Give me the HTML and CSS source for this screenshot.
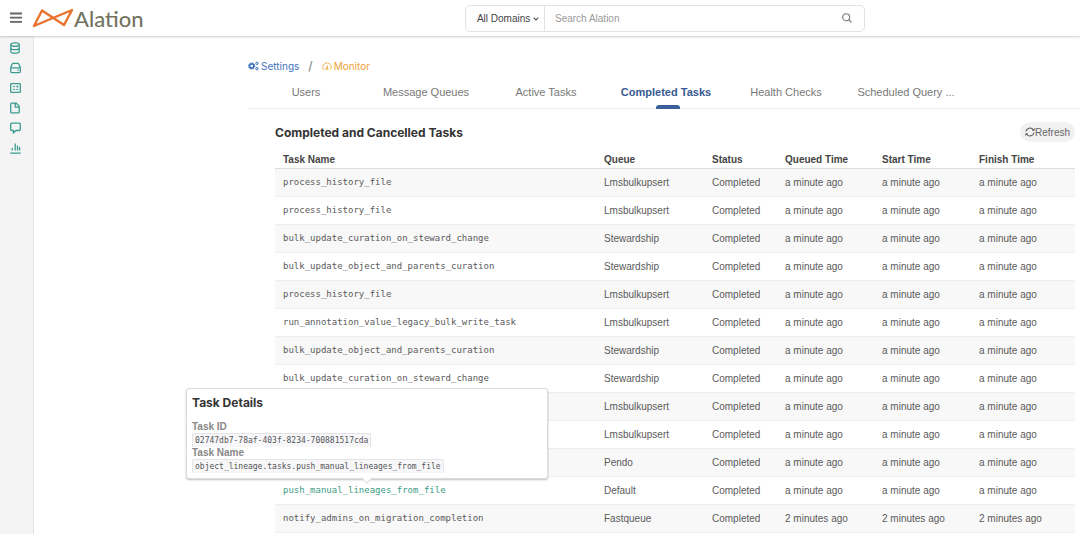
FILE: index.html
```
<!DOCTYPE html>
<html lang="en">
<head>
    <meta charset="utf-8">
    <title>Completed Tasks - Alation</title>
    <link rel="stylesheet" href="styles.css">
</head>
<body>
    <header class="topbar">
        <button class="menu-button" aria-label="Menu">
            <svg width="12" height="12" viewBox="0 0 12 12" fill="none" stroke="#66666a" stroke-width="1.8"><path d="M0 1.500h12M0 5.700h12M0 9.900h12"/></svg>
        </button>
        <a href="#" class="logo">
            <svg width="42" height="20" viewBox="0 0 42 20" fill="none" stroke="#e8722e" stroke-width="2.400" stroke-linejoin="round"><path d="M2 18 10 2.500 32 17 40 2Z"/></svg>
            <span>Alation</span>
        </a>
        <form class="search">
            <button type="button" class="domain-button">All Domains
                <svg width="6" height="4" viewBox="0 0 6 4" fill="none" stroke="#555" stroke-width="1.1"><path d="M.7.7 3 3 5.300.7"/></svg>
            </button>
            <input type="text" placeholder="Search Alation" aria-label="Search Alation">
            <button type="button" class="search-button" aria-label="Search">
                <svg width="10" height="10" viewBox="0 0 10 10" fill="none" stroke="#777" stroke-width="1.1"><circle cx="4.200" cy="4.200" r="3.500"/><path d="M6.800 6.800 9.500 9.500"/></svg>
            </button>
        </form>
    </header>

    <div class="page">
        <nav class="sidebar">
            <a href="#" aria-label="Data sources"><svg viewBox="0 0 12 12"><ellipse cx="5" cy="2.600" rx="4.200" ry="1.800"/><path d="M.8 2.600v6.800c0 1 1.800 1.800 4.200 1.800s4.200-.8 4.200-1.800V2.600M.8 5.900c0 1 1.800 1.700 4.200 1.700s4.200-.7 4.200-1.700"/></svg></a>
            <a href="#" aria-label="File systems"><svg viewBox="0 0 12 12"><path d="M.7 5.500 2.200 2c.2-.5.500-.7 1-.7h4.600c.5 0 .8.2 1 .7l1.500 3.500v4c0 .7-.4 1.100-1.100 1.100H1.800c-.7 0-1.100-.4-1.100-1.100ZM.7 5.800h9.600M7.400 8.200h1.300"/></svg></a>
            <a href="#" aria-label="BI sources"><svg viewBox="0 0 12 12"><rect x=".7" y="1.700" width="9.600" height="8.600" rx=".6"/><path d="M3 4.600h2M3 7.400h2M6.200 4.600h2M6.200 7.400h2M7.500 3.500v2" stroke-width="1"/></svg></a>
            <a href="#" aria-label="Articles"><svg viewBox="0 0 12 12"><path d="M1.700 1.200h4.600l2.900 2.900v5.800c0 .6-.4 1-1 1H1.700c-.6 0-1-.4-1-1V2.200c0-.6.400-1 1-1ZM5.200 1.200v3.900h4"/></svg></a>
            <a href="#" aria-label="Conversations"><svg viewBox="0 0 12 12"><path d="M1.700 1.200h7.600c.6 0 1 .4 1 1v5.300c0 .6-.4 1-1 1H6L3.400 11V8.500H1.700c-.6 0-1-.4-1-1V2.200c0-.6.400-1 1-1Z"/></svg></a>
            <a href="#" aria-label="Analytics"><svg viewBox="0 0 12 12"><path d="M.3 11.200h10.500M2.300 8.500V6M5.200 8.500V1.500M7.500 8.500V3.500M9.600 8.500V5"/></svg></a>
        </nav>

        <main class="content">
            <div class="breadcrumb">
                <a href="#" class="crumb-settings">
                    <svg width="11" height="10" viewBox="0 0 11 10" fill="none" stroke="#3f74bd"><circle cx="3.700" cy="5" r="2.200" stroke-width="1.700"/><circle cx="3.700" cy="5" r="3.200" stroke-width="1" stroke-dasharray="1.250 1.260"/><circle cx="9" cy="2.300" r="1.200" stroke-width="1"/><circle cx="9" cy="7.700" r="1.200" stroke-width="1"/></svg>
                    Settings</a>
                <span class="separator">/</span>
                <a href="#" class="crumb-monitor">
                    <svg width="10" height="9" viewBox="0 0 10 9" fill="none" stroke="#f0a236"><path d="M2 8A4.200 4.200 0 1 1 8 8" stroke-width="1" stroke-dasharray="3 .6"/><circle cx="5" cy="6.600" r="1"/><path d="M5 6 5.600 3.500"/></svg>
                    Monitor</a>
            </div>

            <nav class="tabs">
                <a href="#">Users</a>
                <a href="#">Message Queues</a>
                <a href="#">Active Tasks</a>
                <a href="#" class="active">Completed Tasks</a>
                <a href="#">Health Checks</a>
                <a href="#">Scheduled Query ...</a>
            </nav>

            <section class="tasks">
                <div class="tasks-header">
                    <h1>Completed and Cancelled Tasks</h1>
                    <button class="refresh"><svg width="10" height="10" viewBox="0 0 10 10" fill="none" stroke="#555" stroke-width="1.100"><path d="M.9 4.500A4.100 4.100 0 0 1 8.300 2.800M9.100 5.500A4.100 4.100 0 0 1 1.700 7.200"/><path d="M9.600 1v2.700H6.900ZM.4 9V6.300h2.700Z" fill="#555" stroke="none"/></svg>Refresh</button>
                </div>

                <table>
                    <thead>
                        <tr>
                            <th class="col-name">Task Name</th>
                            <th class="col-queue">Queue</th>
                            <th class="col-status">Status</th>
                            <th class="col-time">Queued Time</th>
                            <th class="col-time">Start Time</th>
                            <th>Finish Time</th>
                        </tr>
                    </thead>
                    <tbody>
                        <tr><td class="name">process_history_file</td><td>Lmsbulkupsert</td><td>Completed</td><td>a minute ago</td><td>a minute ago</td><td>a minute ago</td></tr>
                        <tr><td class="name">process_history_file</td><td>Lmsbulkupsert</td><td>Completed</td><td>a minute ago</td><td>a minute ago</td><td>a minute ago</td></tr>
                        <tr><td class="name">bulk_update_curation_on_steward_change</td><td>Stewardship</td><td>Completed</td><td>a minute ago</td><td>a minute ago</td><td>a minute ago</td></tr>
                        <tr><td class="name">bulk_update_object_and_parents_curation</td><td>Stewardship</td><td>Completed</td><td>a minute ago</td><td>a minute ago</td><td>a minute ago</td></tr>
                        <tr><td class="name">process_history_file</td><td>Lmsbulkupsert</td><td>Completed</td><td>a minute ago</td><td>a minute ago</td><td>a minute ago</td></tr>
                        <tr><td class="name">run_annotation_value_legacy_bulk_write_task</td><td>Lmsbulkupsert</td><td>Completed</td><td>a minute ago</td><td>a minute ago</td><td>a minute ago</td></tr>
                        <tr><td class="name">bulk_update_object_and_parents_curation</td><td>Stewardship</td><td>Completed</td><td>a minute ago</td><td>a minute ago</td><td>a minute ago</td></tr>
                        <tr><td class="name">bulk_update_curation_on_steward_change</td><td>Stewardship</td><td>Completed</td><td>a minute ago</td><td>a minute ago</td><td>a minute ago</td></tr>
                        <tr><td class="name"></td><td>Lmsbulkupsert</td><td>Completed</td><td>a minute ago</td><td>a minute ago</td><td>a minute ago</td></tr>
                        <tr><td class="name"></td><td>Lmsbulkupsert</td><td>Completed</td><td>a minute ago</td><td>a minute ago</td><td>a minute ago</td></tr>
                        <tr><td class="name"></td><td>Pendo</td><td>Completed</td><td>a minute ago</td><td>a minute ago</td><td>a minute ago</td></tr>
                        <tr>
                            <td class="name">
                                <div class="popover-anchor">
                                    <a href="#">push_manual_lineages_from_file</a>
                                    <div class="popover">
                                        <h2>Task Details</h2>
                                        <dl>
                                            <dt>Task ID</dt>
                                            <dd><code>02747db7-78af-403f-8234-700881517cda</code></dd>
                                            <dt>Task Name</dt>
                                            <dd><code>object_lineage.tasks.push_manual_lineages_from_file</code></dd>
                                        </dl>
                                    </div>
                                </div>
                            </td>
                            <td>Default</td><td>Completed</td><td>a minute ago</td><td>a minute ago</td><td>a minute ago</td>
                        </tr>
                        <tr><td class="name">notify_admins_on_migration_completion</td><td>Fastqueue</td><td>Completed</td><td>2 minutes ago</td><td>2 minutes ago</td><td>2 minutes ago</td></tr>
                    </tbody>
                </table>
            </section>
        </main>
    </div>
</body>
</html>
```
FILE: styles.css
```
* {
    box-sizing: border-box;
}
body {
    margin: 0;
    min-height: 100vh;
    display: flex;
    flex-direction: column;
    font-family: "Liberation Sans", Arial, sans-serif;
    font-size: 10px;
    color: #5a5a5a;
    background: #fff;
}
a {
    text-decoration: none;
}
button {
    font-family: inherit;
    font-size: 10px;
    border: none;
    background: none;
    padding: 0;
    cursor: pointer;
}
.topbar {
    position: relative;
    z-index: 1;
    display: flex;
    align-items: center;
    height: 36px;
    background: #fff;
    box-shadow: 0 1px 2px rgba(0,0,0,0.2);
}
.menu-button {
    display: flex;
    margin-left: 10px;
}
.logo {
    display: flex;
    align-items: center;
    width: 134px;
    margin-left: 10px;
    color: #73735f;
    font-family: Lato, sans-serif;
    font-size: 22px;
    font-weight: 500;
}
.search {
    display: flex;
    width: 400px;
    height: 27px;
    margin-left: 299px;
    border: 1px solid #e2e2e2;
    border-radius: 5px;
}
.domain-button {
    width: 79px;
    padding-left: 6px;
    border-right: 1px solid #e2e2e2;
    color: #444;
    white-space: nowrap;
}
.domain-button svg {
    vertical-align: middle;
}
.search input {
    flex: 1;
    min-width: 0;
    padding: 0 10px;
    border: none;
    outline: none;
    background: none;
    font-family: inherit;
    font-size: 10px;
}
.search input::placeholder {
    color: #999;
}
.search-button {
    display: flex;
    align-items: center;
    justify-content: center;
    width: 34px;
}
.page {
    display: flex;
    flex: 1;
}
.sidebar {
    display: flex;
    flex-direction: column;
    gap: 8px;
    width: 34px;
    padding: 6px 0 0 10px;
    background: #f4f4f4;
    border-right: 1px solid #e6e6e6;
}
.sidebar a {
    display: flex;
    width: 12px;
    height: 12px;
}
.sidebar svg {
    width: 12px;
    height: 12px;
    fill: none;
    stroke: #3b9c90;
    stroke-width: 1.3;
    stroke-linejoin: round;
}
.content {
    flex: 1;
    padding-left: 214px;
}
.breadcrumb {
    display: flex;
    align-items: center;
    gap: 9px;
    padding-top: 23px;
    line-height: 14px;
    font-family: Inter, sans-serif;
}
.breadcrumb a {
    display: flex;
    align-items: center;
    gap: 2px;
}
.crumb-settings {
    color: #3f74bd;
}
.crumb-monitor {
    color: #f0a236;
}
.separator {
    font-size: 12px;
    color: #777;
}
.tabs {
    display: flex;
    height: 36px;
    border-bottom: 1px solid #ededed;
}
.tabs a {
    flex: 0 0 120px;
    padding: 10px 4px 0 0;
    line-height: 18px;
    text-align: center;
    font-size: 11px;
    color: #777;
    white-space: nowrap;
}
.tabs .active {
    position: relative;
    font-weight: bold;
    color: #375a92;
}
.tabs .active::after {
    content: "";
    position: absolute;
    bottom: -1px;
    left: 50%;
    width: 24px;
    height: 4px;
    margin-left: -12px;
    background: #3b5f9b;
    border-radius: 3px 3px 0 0;
}
.tasks {
    padding: 13px 5px 0 27px;
}
.tasks-header {
    display: flex;
    align-items: center;
    justify-content: space-between;
    height: 20px;
}
.tasks-header h1 {
    margin: 0;
    font-family: Inter, sans-serif;
    font-size: 12px;
    font-weight: bold;
    color: #333;
}
.refresh {
    display: flex;
    align-items: center;
    height: 20px;
    padding: 0 5px;
    border-radius: 10px;
    background: #f1f1f1;
    color: #666;
}
table {
    width: 100%;
    margin-top: 6px;
    table-layout: fixed;
    border-collapse: collapse;
}
th {
    height: 20px;
    padding: 4px 8px 0;
    border-bottom: 1px solid #ddd;
    text-align: left;
    font-weight: bold;
    color: #444;
}
td {
    height: 28px;
    padding: 0 8px;
    border-bottom: 1px solid #eee;
    white-space: nowrap;
}
.col-name {
    width: 321px;
}
.col-queue {
    width: 108px;
}
.col-status {
    width: 73px;
}
.col-time {
    width: 97px;
}
tbody tr:nth-child(odd) {
    background: #f8f8f8;
}
.name {
    font-family: "DejaVu Sans Mono", monospace;
    font-size: 9px;
}
.name a {
    color: #3b9c86;
}
.popover-anchor {
    position: relative;
    display: inline-block;
}
.popover {
    position: absolute;
    bottom: 16px;
    left: -97px;
    width: 362px;
    height: 91px;
    padding: 7px 5px;
    background: #fff;
    border: 1px solid #ddd;
    border-radius: 3px;
    box-shadow: 0 1px 2px rgba(0,0,0,0.25);
    font-family: "Liberation Sans", Arial, sans-serif;
    font-size: 10px;
}
.popover::after {
    content: "";
    position: absolute;
    bottom: -4px;
    left: 50%;
    width: 7px;
    height: 7px;
    margin-left: -4px;
    background: #fff;
    border: solid #ddd;
    border-width: 0 1px 1px 0;
    transform: rotate(45deg);
}
.popover h2 {
    margin: 0 0 11px;
    line-height: 14px;
    font-family: Inter, sans-serif;
    font-size: 12px;
    font-weight: bold;
    color: #333;
}
.popover dl,
.popover dd {
    margin: 0;
}
.popover dt {
    line-height: 12px;
    font-weight: bold;
    color: #888;
}
.popover dd {
    display: flex;
    height: 14px;
}
.popover code {
    padding: 0 2px;
    line-height: 14px;
    border: 1px solid #e4e4e4;
    border-bottom: none;
    border-radius: 2px 2px 0 0;
    background: #f7f7f9;
    font-family: "DejaVu Sans Mono", monospace;
    font-size: 8px;
    color: #555;
}
```
